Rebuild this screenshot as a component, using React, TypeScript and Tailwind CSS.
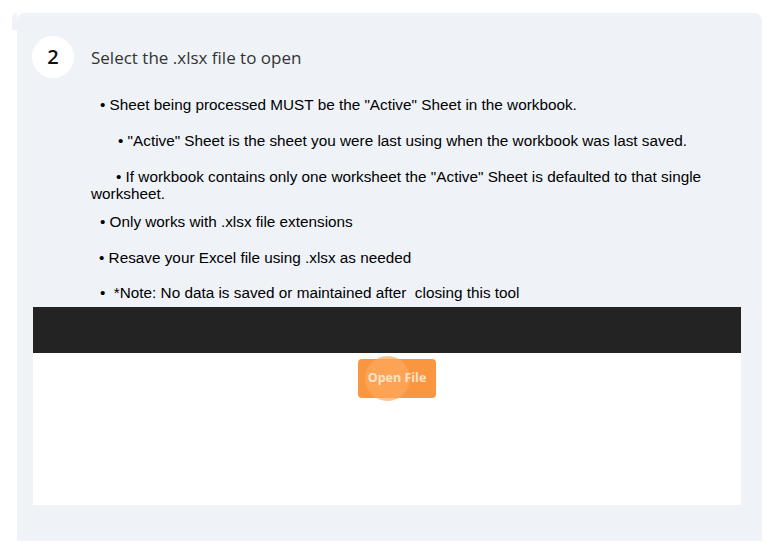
const notes = [
  { text: '• Sheet being processed MUST be the "Active" Sheet in the workbook.', cls: 'indent-[9px]' },
  { text: '• "Active" Sheet is the sheet you were last using when the workbook was last saved.', cls: 'indent-[27px] mt-[19px]' },
  { text: '• If workbook contains only one worksheet the "Active" Sheet is defaulted to that single worksheet.', cls: 'indent-[25px] mt-[19px]' },
  { text: '• Only works with .xlsx file extensions', cls: 'indent-[9px] mt-[11px]' },
  { text: '• Resave your Excel file using .xlsx as needed', cls: 'indent-[8px] mt-[19px]' },
  { text: '•  *Note: No data is saved or maintained after  closing this tool', cls: 'indent-[9px] mt-[18px]' },
];

const App = () => {
  return (
    <div className="min-h-[558px] bg-white pt-[13px] pl-[17px] pr-[20px]">
      <div className="relative bg-[#eff3f8] rounded-tl-lg rounded-tr-lg h-[528px] pt-[23px]">
        {/* little tab on the left edge of the card */}
        <div className="absolute left-[-5px] top-0 w-[5px] h-[17px] bg-[#eff3f8] rounded-tl-md" />

        {/* Step header */}
        <div className="flex items-center pl-[15px]">
          <div className="w-[42px] h-[42px] rounded-full bg-white flex items-center justify-center text-[20px] font-semibold text-[#111] font-['Open_Sans',sans-serif]">
            2
          </div>
          <span className="ml-[17px] mt-[2px] text-[17px] text-[#333] font-['Open_Sans',sans-serif]">
            Select the .xlsx file to open
          </span>
        </div>

        {/* Notes */}
        <div className="pl-[74px] pr-[36px] mt-[18px] font-['Liberation_Sans',Arial,sans-serif] text-[15.3px] leading-[17px] text-black whitespace-pre-wrap">
          {notes.map((n, i) => (
            <p key={i} className={n.cls}>
              {n.text}
            </p>
          ))}
        </div>

        {/* Embedded tool */}
        <div className="ml-[16px] mr-[21px] mt-[6px] bg-white h-[198px]">
          <div className="h-[46px] bg-[#232323]" />
          <div className="flex justify-center pt-[6px] pl-[20px]">
            <button className="relative w-[78px] h-[39px] rounded-[4px] bg-[#fb9640] text-[#fde3c6] text-[12.5px] font-bold font-['Open_Sans',sans-serif]">
              <span className="absolute left-[7px] top-[-3px] w-[45px] h-[45px] rounded-full bg-[#fca85e]/70" />
              <span className="relative">Open File</span>
            </button>
          </div>
        </div>
      </div>
    </div>
  );
};

export default App;
